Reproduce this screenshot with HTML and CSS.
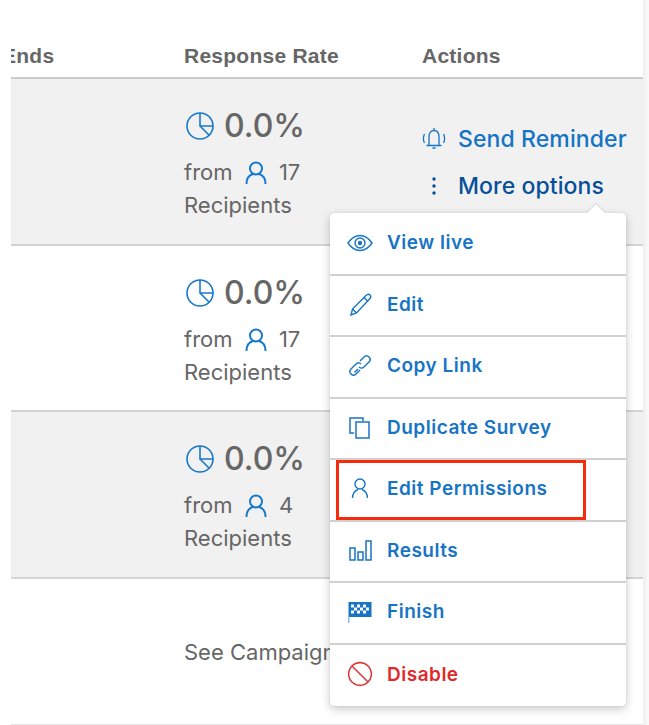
FILE: index.html
```html
<!DOCTYPE html>
<html lang="en">
<head>
<meta charset="utf-8">
<title>Campaign surveys</title>
<link rel="stylesheet" href="styles.css">
</head>
<body>
<svg class="defs" width="0" height="0" aria-hidden="true">
  <symbol id="i-pie" viewBox="0 0 28 28"><g fill="none" stroke="currentColor" stroke-width="1.6"><circle cx="14" cy="14" r="13"/><path d="M14 1v13h13M14 14l9.2 9.2"/></g></symbol>
  <symbol id="i-user" viewBox="0 0 22 24"><g fill="none" stroke="currentColor" stroke-width="2"><circle cx="11" cy="7.5" r="6"/><path d="M1.5 23c0-5.500 3-9 6.500-10M20.500 23c0-5.500-3-9-6.500-10"/></g></symbol>
</svg>
<main class="panel">
  <div class="row head">
    <div class="c-ends">Ends</div>
    <div class="c-rate">Response Rate</div>
    <div class="c-act">Actions</div>
  </div>
  <div class="row body shade">
    <div class="c-ends"></div>
    <div class="c-rate">
      <div class="pct"><svg class="pie"><use href="#i-pie"/></svg>0.0%</div>
      <div class="from">from <svg class="user"><use href="#i-user"/></svg> 17<br>Recipients</div>
    </div>
    <div class="c-act actions">
      <a class="act"><svg class="bell" viewBox="0 0 24 24" fill="none" stroke="currentColor" stroke-width="1.300"><path d="M12 1v2.500M7 18V10c0-4 2-6.500 5-6.500s5 2.500 5 6.500v8M4.500 18.500h15M10.500 21h3"/><path d="M2.500 7c-1.500 3-1.500 6 0 9M21.500 7c1.500 3 1.500 6 0 9"/></svg>Send Reminder</a>
      <a class="act dark"><svg class="dots" viewBox="0 0 24 24" fill="currentColor"><circle cx="12" cy="5" r="1.700"/><circle cx="12" cy="12" r="1.700"/><circle cx="12" cy="19" r="1.700"/></svg>More options</a>
    </div>
  </div>
  <div class="row body">
    <div class="c-ends"></div>
    <div class="c-rate">
      <div class="pct"><svg class="pie"><use href="#i-pie"/></svg>0.0%</div>
      <div class="from">from <svg class="user"><use href="#i-user"/></svg> 17<br>Recipients</div>
    </div>
    <div class="c-act"></div>
  </div>
  <div class="row body shade">
    <div class="c-ends"></div>
    <div class="c-rate">
      <div class="pct"><svg class="pie"><use href="#i-pie"/></svg>0.0%</div>
      <div class="from">from <svg class="user"><use href="#i-user"/></svg> 4<br>Recipients</div>
    </div>
    <div class="c-act"></div>
  </div>
  <div class="row last">
    <div class="c-ends"></div>
    <div class="c-rate see">See Campaign</div>
    <div class="c-act"></div>
  </div>
</main>

<nav class="menu">
  <a class="item"><svg class="ico" viewBox="0 0 26 20" fill="none" stroke="currentColor" stroke-width="1.400"><path d="M1 10c3.500-5 7.500-7.500 12-7.500S21.500 5 25 10c-3.500 5-7.500 7.500-12 7.500S4.500 15 1 10z"/><circle cx="13" cy="10" r="5"/><circle cx="13" cy="10" r="2.200" fill="currentColor" stroke="none"/></svg>View live</a>
  <a class="item"><svg class="ico" viewBox="0 0 26 24" fill="none" stroke="currentColor" stroke-width="1.400"><path d="M4 23l1.500-6L19 3.500c1.500-1.500 3-1.500 4 -.5s1 2.500-.5 4L9.500 21z"/><path d="M5.500 17l4 4M17 5.500l4 4"/></svg>Edit</a>
  <a class="item"><svg class="ico" viewBox="0 0 26 24" fill="none" stroke="currentColor" stroke-width="1.400"><path d="M11 15l-3.500 3.500"/><path d="M13 7l4-4c1.500-1.500 3.500-1.500 5 0s1.500 3.500 0 5l-5 5c-1.500 1.500-3.500 1.500-5 0"/><path d="M14 10c-1.500-1.500-3.500-1.500-5 0l-5 5c-1.500 1.500-1.500 3.500 0 5s3.500 1.500 5 0l4-4"/></svg>Copy Link</a>
  <a class="item"><svg class="ico" viewBox="0 0 26 24" fill="none" stroke="currentColor" stroke-width="1.500"><path d="M7 18H3V3h13v3"/><path d="M9 7h13v16H9z"/></svg>Duplicate Survey</a>
  <a class="item"><svg class="ico" viewBox="0 0 26 24" fill="none" stroke="currentColor" stroke-width="1.400"><circle cx="13" cy="7" r="5"/><path d="M5.500 21c0-4.500 2-7 5.500-8.500M20.500 21c0-4.500-2-7-5.500-8.500"/></svg>Edit Permissions</a>
  <a class="item"><svg class="ico" viewBox="0 0 26 24" fill="none" stroke="currentColor" stroke-width="1.500"><path d="M3 10h5v12H3zM11 14h5v8h-5zM19 3h5v19h-5z"/></svg>Results</a>
  <a class="item"><svg class="ico" viewBox="0 0 26 24"><path d="M1.500 2h23v15H2.200v6H1.500z" fill="currentColor"/><path d="M4 4.500h3v3H4zM10 4.500h3v3h-3zM16 4.500h3v3h-3zM7 7.500h3v3H7zM13 7.500h3v3h-3zM19 7.500h3v3h-3zM4 10.500h3v3H4zM10 10.500h3v3h-3zM16 10.500h3v3h-3z" fill="#fff"/></svg>Finish</a>
  <a class="item danger"><svg class="ico big" viewBox="0 0 24 24" fill="none" stroke="#d63a3a" stroke-width="1.400"><circle cx="12" cy="12" r="10.500"/><path d="M4.600 4.600l14.800 14.800"/></svg>Disable</a>
  <span class="caret"></span>
  <span class="mark"></span>
</nav>
</body>
</html>
```

FILE: styles.css
```css
* { box-sizing: border-box; }
html, body { margin: 0; height: 100%; }
body {
  position: relative;
  height: 725px;
  overflow: hidden;
  background: linear-gradient(90deg, #fff 643px, #efefef 643px, #fafafa 649px);
  font-family: "Inter", "Liberation Sans", sans-serif;
  color: #666;
}
.defs { position: absolute; }
.panel {
  margin-left: 11px;
  width: 632px;
  height: 725px;
  padding-top: 33px;
  overflow: hidden;
  background: #fff;
}
.row { display: grid; grid-template-columns: 173px 238px 1fr; }
.head {
  height: 46px;
  padding-top: 2px;
  align-items: center;
  font-size: 21px;
  font-weight: 700;
  letter-spacing: .25px;
  font-family: "Liberation Sans", sans-serif;
  border-bottom: 2px solid #ccc;
}
.c-ends { white-space: nowrap; }
.head .c-ends { text-indent: -9px; }
.body { height: 166.500px; border-bottom: 2px solid #d4d4d4; }
.shade { background: #f1f1f1; }
.last { height: 147px; border-bottom: 2px solid #e6e6e6; }
.pct {
  display: flex;
  align-items: center;
  gap: 10px;
  padding-top: 29px;
  padding-left: 2px;
  font-size: 32px;
  font-weight: 500;
  line-height: 36px;
}
.pie { width: 28px; height: 28px; color: #1878cc; }
.from { margin-top: 12px; font-size: 22px; line-height: 33px; }
.user { width: 22px; height: 24px; margin: 0 6px; color: #1878cc; vertical-align: -5px; }
.see { padding-top: 59px; font-size: 22px; line-height: 28px; white-space: nowrap; }
.actions { display: flex; flex-direction: column; padding-top: 36px; }
.act { display: flex; align-items: center; height: 47px; font-size: 23px; font-weight: 500; letter-spacing: .1px; color: #1574c4; white-space: nowrap; }
.act svg { width: 24px; height: 24px; margin-right: 12px; flex: none; }
.dark { color: #064f9a; }
.menu {
  position: absolute;
  left: 330px;
  top: 213px;
  width: 296px;
  height: 493px;
  padding-top: 1px;
  display: flex;
  flex-direction: column;
  background: #fff;
  border-radius: 4px;
  box-shadow: 0 0 1px #aaa, 0 3px 10px rgba(0,0,0,.22);
}
.item {
  display: flex;
  align-items: center;
  height: 61.500px;
  padding-left: 17px;
  padding-bottom: 2px;
  font-size: 19px;
  font-weight: 600;
  letter-spacing: .5px;
  color: #1874c4;
  border-bottom: 2px solid #d0d0d0;
  white-space: nowrap;
}
.item:last-of-type { border-bottom: 0; }
.ico { width: 26px; height: 24px; margin-right: 14px; flex: none; }
.big { height: 26px; }
.danger { color: #e02a2a; }
.caret {
  position: absolute;
  left: 258px;
  top: -8px;
  width: 16px;
  height: 16px;
  background: #fff;
  transform: rotate(45deg) scale(.8);
  box-shadow: -1px -1px 1px rgba(0,0,0,.12);
}
.mark {
  position: absolute;
  left: 6px;
  top: 247px;
  width: 250px;
  height: 60px;
  border: 3px solid #f52b0c;
}
```
